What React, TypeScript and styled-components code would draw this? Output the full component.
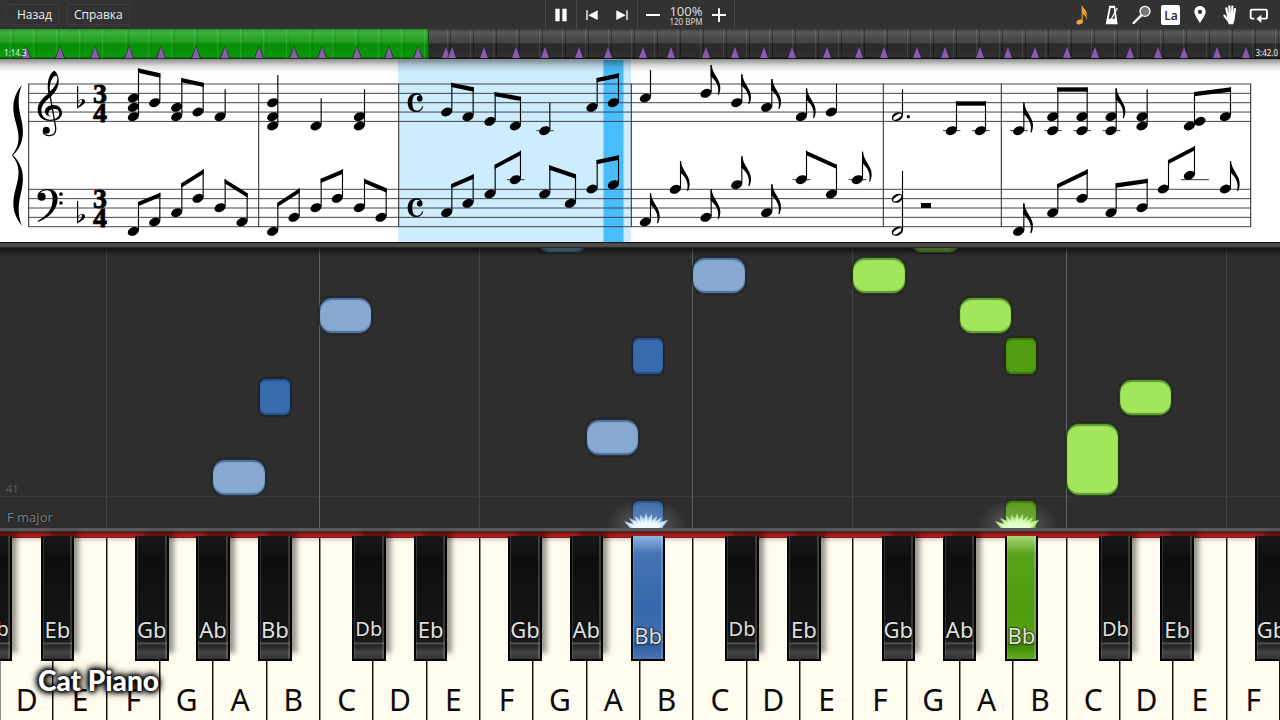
import React from 'react';
import styled, { createGlobalStyle, css } from 'styled-components';

const GlobalStyle = createGlobalStyle`
  * { box-sizing: border-box; }
  body {
    margin: 0;
    background: #2e2e2e;
    color: #eee;
    font-family: 'Noto Sans', 'Open Sans', sans-serif;
    overflow: hidden;
  }
  button { font-family: inherit; color: inherit; margin: 0; padding: 0; border: 0; background: none; cursor: pointer; }
`;

const KEY_COUNT = 24;
const lane = (n: number) => `${(n * 100) / KEY_COUNT}%`;

/* ---------- page ---------- */

const Page = styled.main`
  display: flex;
  flex-direction: column;
  min-height: 100vh;
`;

/* ---------- toolbar ---------- */

const Toolbar = styled.header`
  display: grid;
  grid-template-columns: 1fr auto 1fr;
  height: 29px;
  background: #323232;
`;

const Nav = styled.nav`
  display: flex;
  align-items: center;
  gap: 8px;
  padding-left: 4px;
`;

const NavButton = styled.button`
  height: 21px;
  padding: 0 6px;
  border: 1px solid #3e3e3e;
  border-radius: 2px;
  font-family: 'Open Sans', sans-serif;
  font-size: 12px;
  line-height: 19px;
`;

const BackButton = styled(NavButton)`
  display: flex;
  align-items: center;
  padding-left: 0;
  border-left: 0;
  svg { width: 13px; height: 21px; margin: -1px 0; }
`;

const Transport = styled.div`
  display: flex;
`;

const TransportGroup = styled.div`
  display: flex;
  align-items: center;
  border-right: 1px solid #484848;
  &:first-child { border-left: 1px solid #484848; }
`;

const ToolButton = styled.button`
  display: flex;
  align-items: center;
  justify-content: center;
  width: 30px;
  height: 29px;
  svg { width: 24px; height: 24px; fill: #fff; }
`;

const Tempo = styled.div`
  display: flex;
  flex-direction: column;
  align-items: center;
  width: 36px;
  white-space: nowrap;
`;

const TempoPercent = styled.strong`
  color: #ddd;
  font-size: 13px;
  font-weight: 400;
  line-height: 14px;
`;

const TempoBpm = styled.span`
  color: #ddd;
  font-size: 8px;
  line-height: 7px;
`;

const Tools = styled.div`
  display: flex;
  justify-content: space-between;
  justify-self: end;
  width: 206px;
  margin-right: 6px;
`;

const LabelBadge = styled.span`
  width: 19px;
  height: 20px;
  border-radius: 2px;
  background: #fff;
  color: #323232;
  font-size: 12px;
  font-weight: 600;
  line-height: 22px;
`;

/* ---------- timeline ---------- */

const TimelineBar = styled.section`
  position: relative;
  display: flex;
  align-items: flex-end;
  justify-content: space-between;
  height: 31px;
  padding: 0 2px 0 4px;
  border-bottom: 1px solid #8d8d8d;
  background:
    repeating-linear-gradient(90deg, transparent 0 10px, #ffffff1a 10px 11px, transparent 11px 13px, #00000055 13px 14px, transparent 14px 23px),
    linear-gradient(#3a3a3a, #585858 3px, #414141 14px, #292929 15px, #2e2e2e 28px, #111 29px);
`;

const Played = styled.div`
  position: absolute;
  left: 0;
  top: 0;
  bottom: 0;
  border-right: 1px solid #114d11;
  background:
    repeating-linear-gradient(90deg, transparent 0 10px, #ffffff1c 10px 11px, transparent 11px 13px, #0050002e 13px 14px, transparent 14px 23px),
    linear-gradient(#248f24, #3fb03f 3px, #1fa01f 13px, #078f07 15px, #0a960a 28px, #144014 29px);
`;

const Time = styled.span`
  position: relative;
  z-index: 1;
  font-size: 8px;
  line-height: 12px;
`;

const Marker = styled.i`
  position: absolute;
  bottom: 1px;
  width: 10px;
  height: 12px;
  margin-left: -5px;
  background: #2b2435;
  clip-path: polygon(50% 0, 100% 100%, 0 100%);
  &::after {
    content: '';
    position: absolute;
    inset: 1px 1px 0;
    background: #8a5cb0;
    clip-path: polygon(50% 0, 100% 100%, 0 100%);
  }
`;

/* ---------- sheet ---------- */

const Sheet = styled.section`
  position: relative;
  background: #fff;
  svg { display: block; width: 100%; height: auto; }
  &::after {
    content: '';
    position: absolute;
    inset: 0 0 auto;
    height: 13px;
    background: linear-gradient(#00000066, #0000001c 50%, #0000);
  }
`;

const SheetEdge = styled.div`
  height: 6px;
  background: linear-gradient(#111 0 1px, #484848 1px, #505050 4px, #1c1c1c 6px);
`;

/* ---------- falling notes ---------- */

const Roll = styled.section`
  position: relative;
  display: flex;
  flex: 1;
  flex-direction: column;
  justify-content: flex-end;
  min-height: 280px;
  overflow: hidden;
  background: #2e2e2e;
  &::after {
    content: '';
    position: absolute;
    inset: 0 0 auto;
    height: 8px;
    background: linear-gradient(#0009, #0000);
  }
`;

const Guide = styled.i<{ $strong: boolean }>`
  position: absolute;
  top: 0;
  bottom: 0;
  width: 1px;
  margin-left: -1px;
  background: ${(p) => (p.$strong ? '#646464' : '#444')};
`;

const BarNumber = styled.div`
  padding-left: 6px;
  border-bottom: 1px solid #383838;
  color: #5c5c5c;
  font-size: 11px;
  line-height: 15px;
`;

const KeySignature = styled.div`
  height: 31px;
  padding-left: 7px;
  color: #858585;
  font-family: 'Open Sans', sans-serif;
  font-size: 13px;
  line-height: 40px;
  text-shadow: 0 0 2px #000;
`;

type Hue = 'blue' | 'green';

const noteColors = {
  blue: { light: ['#88a9cf', '#4f6f98', '#1f2f45'], dark: ['#386bad', '#2b5087', '#16243a'] },
  green: { light: ['#a2e65c', '#609838', '#25450f'], dark: ['#539b10', '#3f780f', '#1b3508'] },
};

const Note = styled.i<{ $hue: Hue; $black: boolean; $height: number; $bottom: number }>`
  position: absolute;
  bottom: ${(p) => p.$bottom}px;
  width: ${(p) => (p.$black ? 'calc(100% / 40)' : 'calc(100% / 24)')};
  height: ${(p) => p.$height}px;
  margin-left: -1px;
  border: 1px solid ${(p) => noteColors[p.$hue][p.$black ? 'dark' : 'light'][2]};
  border-radius: ${(p) => (p.$black ? 7 : 13)}px;
  ${(p) => {
    const [fill, edge] = noteColors[p.$hue][p.$black ? 'dark' : 'light'];
    return css`
      background: ${fill};
      box-shadow: inset 0 2px 1px ${edge}, inset 0 -2px 1px ${edge}, 0 0 2px #111;
    `;
  }}
`;

const Splash = styled.svg`
  position: absolute;
  bottom: -20px;
  width: 120px;
  height: 70px;
  margin-left: -60px;
`;

/* ---------- keyboard ---------- */

const RedFelt = styled.div`
  height: 10px;
  background: linear-gradient(#5a5a5a 0 3px, #2b1212 4px, #8e1414 5px, #b42020 9px, #5c0b0b);
`;

const Keyboard = styled.section`
  display: flex;
  height: 182px;
  background: #fffbee;
`;

const WhiteKeySlot = styled.div`
  position: relative;
  flex: 1;
  min-width: 0;
`;

const WhiteKey = styled.button`
  display: block;
  width: 100%;
  height: 100%;
  padding-top: 141px;
  border-left: 1px solid #8f8c84;
  border-right: 1px solid #111;
  background: linear-gradient(#d9d5ca, #fffbee 5px);
  color: #0a0a0a;
  font-size: 30px;
  line-height: 41px;
  text-align: center;
`;

type Press = Hue | undefined;

const pressed = {
  blue: 'linear-gradient(#8fb4e2, #4474b4 18px, #3567aa 70px, #3f70b2 106px, #2c5996 107px, #4878ba)',
  green: 'linear-gradient(#a5d873, #5ba31c 18px, #519a0d 70px, #58a214 106px, #3c7c06 107px, #62b01c)',
};
const rest = 'linear-gradient(#181818, #0e0e0e 25px, #151515 90px, #1b1b1b 106px, #5a5a5a 107px, #262626 109px, #2e2e2e 112px, #444 116px, #333)';

const BlackKey = styled.button<{ $left: number; $press: Press; $narrow?: boolean }>`
  position: absolute;
  z-index: 1;
  top: -2px;
  left: ${(p) => p.$left}%;
  width: 63%;
  height: 125px;
  padding-top: ${(p) => (p.$press ? 85 : 79)}px;
  border: solid #030303;
  border-width: 0 2px 2px;
  background: ${(p) => (p.$press ? pressed[p.$press] : rest)};
  box-shadow: inset 1px 0 #ffffff22, inset -2px 0 #ffffff2a ${(p) => (p.$press ? '' : ', 7px -6px 5px -2px #0006')};
  color: #e0e0e0;
  font-size: ${(p) => (p.$narrow ? 20 : 22)}px;
  line-height: 28px;
  text-shadow: 0 0 2px #000, 0 0 2px #000;
  white-space: nowrap;
  display: flex;
  justify-content: center;
  align-items: flex-start;
`;

const Watermark = styled.div`
  position: absolute;
  z-index: 2;
  bottom: 24px;
  left: 38px;
  color: #fff;
  font-family: Lato, sans-serif;
  font-size: 28px;
  font-weight: 900;
  line-height: 32px;
  text-shadow: 0 0 3px #000, 0 0 4px #000, 0 0 6px #000, 0 0 8px #000, 0 0 9px #000;
`;

const KeyboardWrap = styled.div`
  position: relative;
  overflow-x: clip;
`;

/* ---------- data ---------- */

const markers = [
  26, 60, 95, 129, 161, 196, 225, 259, 294, 322, 357, 389, 418, 446, 452, 484, 516, 545, 579, 608, 643, 671, 706, 735,
  764, 792, 827, 859, 884, 917, 945, 980, 1008, 1035, 1067, 1095, 1130, 1158, 1184, 1217, 1246,
];

const letters = 'DEFGABCDEFGABCDEFGABCDEF'.split('');
const flats: Record<string, { name: string; left: number }> = {
  C: { name: 'Db', left: 60 },
  D: { name: 'Eb', left: 76 },
  F: { name: 'Gb', left: 53 },
  G: { name: 'Ab', left: 68 },
  A: { name: 'Bb', left: 84 },
};
const pressedKeys: Record<number, Hue> = { 11: 'blue', 18: 'green' };

const fallingNotes: { at: number; black?: boolean; hue: Hue; bottom: number; height: number }[] = [
  { at: 4, hue: 'blue', bottom: 32, height: 37 },
  { at: 4.87, black: true, hue: 'blue', bottom: 112, height: 38 },
  { at: 6, hue: 'blue', bottom: 194, height: 37 },
  { at: 10.06, hue: 'blue', bottom: 275, height: 37 },
  { at: 11, hue: 'blue', bottom: 72, height: 37 },
  { at: 11.87, black: true, hue: 'blue', bottom: 153, height: 38 },
  { at: 11.87, black: true, hue: 'blue', bottom: -10, height: 38 },
  { at: 13, hue: 'blue', bottom: 234, height: 37 },
  { at: 16, hue: 'green', bottom: 234, height: 37 },
  { at: 17.06, hue: 'green', bottom: 275, height: 37 },
  { at: 18, hue: 'green', bottom: 194, height: 37 },
  { at: 18.87, black: true, hue: 'green', bottom: 153, height: 38 },
  { at: 18.87, black: true, hue: 'green', bottom: -10, height: 38 },
  { at: 20, hue: 'green', bottom: 32, height: 73 },
  { at: 21, hue: 'green', bottom: 112, height: 37 },
];

/* ---------- notation ---------- */

type Chord = [x: number, ys: number[]];
type BeamPair = [a: Chord, b: Chord, topA: number, topB: number];
type Single = [x: number, ys: number[], top: number];

interface Passage {
  x: number;
  beams: BeamPair[];
  quarters: Single[];
  eighths: Single[];
  halves: Single[];
  ledgers: [x1: number, x2: number, y: number][];
  bars: number[];
}

/* Positions in a passage are thirds of a sheet unit. */
const passages: Passage[] = [
  {
    x: 0,
    beams: [
      [[400, [114, 142, 170]], [464, [128]], 25, 40],
      [[530, [142, 170]], [594, [156]], 54, 68],
      [[400, [514]], [464, [486]], 426, 398],
      [[530, [458]], [594, [415]], 370, 328],
      [[660, [443]], [726, [486]], 357, 400],
      [[818, [514]], [882, [472]], 428, 385],
      [[948, [443]], [1012, [415]], 356, 328],
      [[1078, [443]], [1143, [472]], 356, 385],
    ],
    quarters: [[660, [170], 88], [818, [128, 170, 198], 45], [948, [198], 115], [1078, [170, 198], 88]],
    eighths: [],
    halves: [],
    ledgers: [],
    bars: [86, 776],
  },
  {
    x: 395,
    beams: [
      [[155, [156]], [219, [170]], 68, 82],
      [[285, [184]], [361, [198]], 96, 110],
      [[591, [142]], [655, [128]], 54, 40],
      [[155, [458]], [219, [430]], 372, 343],
      [[285, [402]], [361, [359]], 314, 272],
      [[449, [402]], [526, [430]], 316, 343],
      [[591, [387]], [655, [374]], 300, 286],
    ],
    quarters: [[449, [212], 128], [751, [114], 30]],
    eighths: [
      [933, [100], 15], [1025, [128], 43], [1115, [142], 57], [751, [486], 400],
      [841, [388], 303], [933, [472], 388], [1025, [374], 289], [1115, [458], 373],
    ],
    halves: [],
    ledgers: [[336, 389, 359], [424, 476, 212]],
    bars: [11, 709],
  },
  {
    x: 790,
    beams: [
      [[34, [359]], [124, [402]], 272, 314],
      [[484, [212]], [571, [212]], 124, 124],
      [[788, [170, 212]], [876, [170, 212]], 82, 82],
      [[1198, [198]], [1306, [170]], 96, 82],
      [[788, [458]], [876, [415]], 372, 328],
      [[963, [458]], [1056, [443]], 370, 356],
      [[1120, [387]], [1198, [346]], 300, 258],
    ],
    quarters: [[124, [156], 72], [1056, [170, 198], 88]],
    eighths: [
      [34, [170], 85], [202, [359], 275], [686, [212], 128], [963, [170, 212], 85],
      [686, [514], 430], [1306, [387], 303],
    ],
    halves: [[322, [170], 88], [322, [415, 514], 333]],
    ledgers: [
      [8, 61, 359], [176, 229, 359], [459, 511, 212], [546, 599, 212], [660, 713, 212],
      [763, 815, 212], [850, 903, 212], [938, 991, 212], [1173, 1257, 359],
    ],
    bars: [280, 634, 1382],
  },
];

const Head = ({ x, y, open }: { x: number; y: number; open?: boolean }) => (
  <g transform={`translate(${x} ${y}) rotate(-24)`}>
    <ellipse rx="17.500" ry="12.500" />
    {open && <ellipse rx="14" ry="6" fill="#fff" transform="rotate(-10)" />}
  </g>
);

const Stem = ({ x, ys, top }: { x: number; ys: number[]; top: number }) => (
  <path d={`M${x + 15.5} ${top}V${Math.max(...ys) - 4}`} stroke="#000" strokeWidth="3.4" />
);

const PassageNotes = ({ p }: { p: Passage }) => (
  <g transform={`translate(${p.x} 0) scale(0.33333)`}>
    {p.bars.map((x) => (
      <path key={x} d={`M${x} 71V501`} stroke="#3a3a42" strokeWidth="3.4" />
    ))}
    {p.ledgers.map(([a, b, y]) => (
      <path key={`${a}-${y}`} d={`M${a} ${y}H${b}`} stroke="#333" strokeWidth="3" />
    ))}
    {p.beams.map(([a, b, ta, tb], i) => (
      <g key={i}>
        {[a, b].map(([x, ys], j) => (
          <g key={j}>
            {ys.map((y) => <Head key={y} x={x} y={y} />)}
            <Stem x={x} ys={ys} top={j ? tb : ta} />
          </g>
        ))}
        <path d={`M${a[0] + 14} ${ta}L${b[0] + 17} ${tb}v13L${a[0] + 14} ${ta + 13}z`} />
      </g>
    ))}
    {[...p.quarters, ...p.eighths].map(([x, ys, top], i) => (
      <g key={i}>
        {ys.map((y) => <Head key={y} x={x} y={y} />)}
        <Stem x={x} ys={ys} top={top} />
      </g>
    ))}
    {p.eighths.map(([x, , top], i) => (
      <path
        key={i}
        transform={`translate(${x + 14} ${top})`}
        d="M0 0H3C5 28 29 42 29 68C29 76 27 84 24 90L21 89C25 74 24 56 3 36L0 34Z"
      />
    ))}
    {p.halves.map(([x, ys, top], i) => (
      <g key={i}>
        {ys.map((y) => <Head key={y} x={x} y={y} open />)}
        <Stem x={x} ys={ys} top={top} />
      </g>
    ))}
  </g>
);

const Flat = ({ y }: { y: number }) => (
  <g transform={`translate(25 ${y})`}>
    <path
      d="M182 60h3.500v45C192 97 206 96 206 106C206 114 196 120 182 128zM185.500 109v12C193 115 197 110 197 105C197 99 190 101 185.500 109z"
      fillRule="evenodd"
    />
  </g>
);

const commonTime =
  'M82 115C81 105 74 100 64 100C48 100 38 111 38 128C38 145 48 156 64 156C75 156 82 149 85 140L82 139C79 147 74 152 67 152C57 152 52 143 52 128C52 112 57 104 66 104C70 104 73 105 75 108Z';

const Score = () => (
  <svg viewBox="0 0 1280 182" role="img" aria-label="Sheet music">
    <rect x="398" width="233" height="182" fill="#cdecfd" />
    <rect x="603.500" width="20" height="182" fill="#49bdfb" />
    {[24, 129.300].map((top) =>
      [0, 1, 2, 3, 4].map((n) => (
        <path key={`${top}-${n}`} d={`M28.500 ${top + n * 9.35}H1251`} stroke="#44444c" strokeWidth="1" />
      )),
    )}
    <g transform="translate(8 6) scale(0.33333)">
      <path d="M42 56C10 95 12 130 24 172C34 208 38 236 12 268C38 300 34 328 24 364C12 406 10 441 42 480C26 440 32 410 41 372C50 330 44 296 15 268C44 240 50 206 41 164C32 126 26 96 42 56Z" />
      <path
        fillRule="evenodd"
        d="M139 14C148 20 153 34 152 47C151 66 141 80 127 93C112 106 100 118 100 135C100 150 112 161 127 161C144 161 154 153 154 142C154 133 147 129 139 129C127 129 121 136 121 142C121 147 124 150 129 152C119 151 111 146 111 136C111 125 123 117 136 117C152 117 162 127 162 141C162 156 148 165 127 165C104 165 89 151 89 131C89 111 103 98 121 82C116 52 122 22 139 14ZM144 29C134 30 123 48 126 76C139 65 148 50 148 38C148 32 147 29 144 29Z"
      />
      <path d="M124 76L142 178C146 200 138 209 124 209C114 209 107 203 105 196" fill="none" stroke="#000" strokeWidth="4" />
      <circle cx="115" cy="193" r="10.500" />
      <path d="M89 394C87 378 102 369 120 369C138 369 149 381 149 398C149 430 122 456 90 468L89 465C116 450 134 430 134 400C134 382 128 373 118 373C106 373 97 378 94 385Z" />
      <circle cx="101" cy="392" r="12" />
      <circle cx="159" cy="384" r="5.500" />
      <circle cx="159" cy="411" r="5.500" />
      <Flat y={0} />
      <Flat y={345} />
    </g>
    {[24, 129].map((top) => (
      <g
        key={top}
        fontFamily="'Liberation Serif', serif"
        fontWeight="700"
        fontSize="28"
        textAnchor="middle"
        stroke="#000"
        strokeWidth="0.800"
      >
        <text x="100" y={top + 19}>3</text>
        <text x="100" y={top + 38}>4</text>
      </g>
    ))}
    {[0, 315].map((dy) => (
      <g key={dy} transform={`translate(395 ${dy / 3}) scale(0.33333)`}>
        <path d={commonTime} />
        <circle cx="74" cy="116" r="8.500" />
      </g>
    ))}
    {passages.map((p) => <PassageNotes key={p.x} p={p} />)}
    <g transform="translate(790 0) scale(0.33333)">
      <Head x={1230} y={184} />
      <circle cx="355" cy="170" r="5" />
      <rect x="393" y="429" width="30" height="15" />
    </g>
  </svg>
);

const spikes =
  'M44 50L38 43L47 46L43 40L50 43L49 38L54 42L54 37L58 41L60 35L62 41L66 36L66 42L71 38L70 43L76 39L74 44L82 42L76 50Z';

const Burst = ({ hue, at }: { hue: Hue; at: number }) => (
  <Splash viewBox="0 0 120 70" style={{ left: lane(at) }} aria-hidden="true">
    <defs>
      <radialGradient id={`glow-${hue}`}>
        <stop offset="0" stopColor={hue === 'blue' ? '#dceaff' : '#dcffc0'} stopOpacity="0.7" />
        <stop offset="0.4" stopColor="#ccc" stopOpacity="0.22" />
        <stop offset="1" stopColor="#ccc" stopOpacity="0" />
      </radialGradient>
    </defs>
    <ellipse cx="60" cy="48" rx="40" ry="28" fill={`url(#glow-${hue})`} />
    <path d={spikes} fill={hue === 'blue' ? '#b9d6fa' : '#b4ef86'} />
    <path d={spikes} fill={hue === 'blue' ? '#eef6ff' : '#e2ffca'} transform="translate(12 15) scale(0.8 0.7)" />
  </Splash>
);

/* ---------- app ---------- */

export default function App() {
  return (
    <Page>
      <GlobalStyle />
      <Toolbar>
        <Nav>
          <BackButton>
            <svg viewBox="0 0 13 21" fill="none" stroke="#3e3e3e"><path d="M13 .5H9L.5 10.500L9 20.500H13" /></svg>
            Назад
          </BackButton>
          <NavButton>Справка</NavButton>
        </Nav>
        <Transport>
          <TransportGroup>
            <ToolButton aria-label="Pause">
              <svg viewBox="0 0 72 72"><path d="M19 17h13v38H19zM40 17h13v38H40z" /></svg>
            </ToolButton>
          </TransportGroup>
          <TransportGroup>
            <ToolButton aria-label="Previous bar">
              <svg viewBox="0 0 72 72"><path d="M19 22h4v29h-4zM53 22v29L25 36.500z" /></svg>
            </ToolButton>
            <ToolButton aria-label="Next bar">
              <svg viewBox="0 0 72 72"><path d="M49 22h4v29h-4zM19 22v29L47 36.500z" /></svg>
            </ToolButton>
          </TransportGroup>
          <TransportGroup>
            <ToolButton aria-label="Slower">
              <svg viewBox="0 0 72 72"><path d="M15 33h42v6H15z" /></svg>
            </ToolButton>
            <Tempo>
              <TempoPercent>100%</TempoPercent>
              <TempoBpm>120 BPM</TempoBpm>
            </Tempo>
            <ToolButton aria-label="Faster">
              <svg viewBox="0 0 72 72"><path d="M15 33h18V16h6v17h18v6H39v18h-6V39H15z" /></svg>
            </ToolButton>
          </TransportGroup>
        </Transport>
        <Tools>
          <ToolButton aria-label="Sheet music">
            <svg viewBox="0 0 72 72" style={{ fill: '#f0a83c' }}>
              <ellipse cx="26" cy="57" rx="10" ry="7" transform="rotate(-22 26 57)" />
              <path d="M32 8h3c1 11 15 13 14 32c-2-9-8-12-14-14v31h-3z" />
              <path d="M35 21c3 8 15 12 12 31c-1-11-6-15-12-19z" />
            </svg>
          </ToolButton>
          <ToolButton aria-label="Metronome">
            <svg viewBox="0 0 72 72">
              <path d="M28 8H45L53 64H17Z" />
              <path d="M32 15H41L45 47H26Z" fill="#323232" />
              <path d="M34 48L52 15" stroke="#fff" strokeWidth="4" />
            </svg>
          </ToolButton>
          <ToolButton aria-label="Zoom">
            <svg viewBox="0 0 72 72">
              <path d="M34 37L11 60" stroke="#fff" strokeWidth="7" strokeLinecap="round" />
              <circle cx="45" cy="25" r="15" fill="#787878" stroke="#fff" strokeWidth="4" />
            </svg>
          </ToolButton>
          <ToolButton aria-label="Note labels"><LabelBadge>La</LabelBadge></ToolButton>
          <ToolButton aria-label="Bookmark">
            <svg viewBox="0 0 72 72">
              <path fillRule="evenodd" d="M36 9C26 9 19 17 19 26C19 36 30 48 36 61C42 48 53 36 53 26C53 17 46 9 36 9ZM36 20a6.500 6.500 0 1 1 0 13a6.500 6.500 0 0 1 0-13Z" />
            </svg>
          </ToolButton>
          <ToolButton aria-label="Hands">
            <svg viewBox="0 0 72 72">
              <path d="M25 16L31 42M34 10L36 38M43 11L42 38M51 18L47 42M19 38L30 52" stroke="#fff" strokeWidth="6.500" strokeLinecap="round" />
              <path d="M28 33H50V48C49 56 46 58 46 64H32C31 57 28 53 26 49Z" />
            </svg>
          </ToolButton>
          <ToolButton aria-label="Loop">
            <svg viewBox="0 0 72 72">
              <path d="M22 47H15Q11 47 11 43V24Q11 20 15 20H56Q60 20 60 24V43Q60 47 56 47H42" fill="none" stroke="#fff" strokeWidth="5.500" />
              <path d="M43 35V60L28 47Z" />
            </svg>
          </ToolButton>
        </Tools>
      </Toolbar>

      <TimelineBar>
        <Played style={{ width: '33.5%' }} />
        {markers.map((m) => <Marker key={m} style={{ left: `${m / 12.8}%` }} />)}
        <Time>1:14.3</Time>
        <Time>3:42.0</Time>
      </TimelineBar>

      <Sheet><Score /></Sheet>
      <SheetEdge />

      <Roll>
        {letters.map((l, i) => (l === 'C' || l === 'F') && <Guide key={i} $strong={l === 'C'} style={{ left: lane(i) }} />)}
        <BarNumber>41</BarNumber>
        <KeySignature>F major</KeySignature>
        {fallingNotes.map((n, i) => (
          <Note key={i} $hue={n.hue} $black={!!n.black} $height={n.height} $bottom={n.bottom} style={{ left: lane(n.at) }} />
        ))}
        <Burst hue="blue" at={12.12} />
        <Burst hue="green" at={19.06} />
      </Roll>

      <RedFelt />
      <KeyboardWrap>
        <Keyboard>
          {letters.map((l, i) => (
            <WhiteKeySlot key={i}>
              <WhiteKey>{l}</WhiteKey>
              {i === 0 && <BlackKey $left={-40} $press={undefined} $narrow>Db</BlackKey>}
              {flats[l] && (
                <BlackKey $left={flats[l].left} $press={pressedKeys[i]} $narrow={l === 'C'}>{flats[l].name}</BlackKey>
              )}
            </WhiteKeySlot>
          ))}
        </Keyboard>
        <Watermark>Cat Piano</Watermark>
      </KeyboardWrap>
    </Page>
  );
}
